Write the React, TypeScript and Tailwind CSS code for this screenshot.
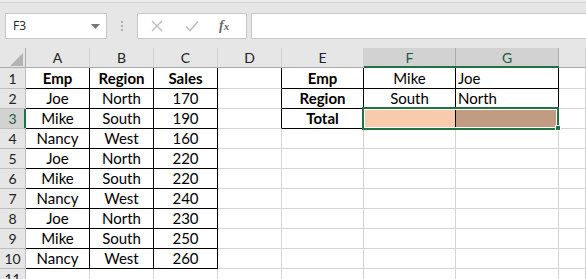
import React from "react";

const cols = ["A", "B", "C", "D", "E", "F", "G", ""];
const cellFont = { fontFamily: "Lato, 'Open Sans', sans-serif" };

type Cell = { t?: string; b?: boolean; a?: "l" | "c"; bg?: string };

const data: Record<string, Cell> = {};
const left = [
  ["Emp", "Region", "Sales"],
  ["Joe", "North", "170"],
  ["Mike", "South", "190"],
  ["Nancy", "West", "160"],
  ["Joe", "North", "220"],
  ["Mike", "South", "220"],
  ["Nancy", "West", "240"],
  ["Joe", "North", "230"],
  ["Mike", "South", "250"],
  ["Nancy", "West", "260"],
];
left.forEach((row, i) =>
  row.forEach((v, j) => {
    data[`${i + 1}-${j}`] = { t: v, b: i === 0, a: "c" };
  })
);
data["1-4"] = { t: "Emp", b: true, a: "c" };
data["2-4"] = { t: "Region", b: true, a: "c" };
data["3-4"] = { t: "Total", b: true, a: "c" };
data["1-5"] = { t: "Mike", a: "c" };
data["2-5"] = { t: "South", a: "c" };
data["1-6"] = { t: "Joe", a: "l" };
data["2-6"] = { t: "North", a: "l" };
data["3-5"] = { bg: "bg-[#f8cbad]" };
data["3-6"] = { bg: "bg-[#c19c83]" };

const bordered = (r: number, c: number) =>
  (r >= 1 && r <= 10 && c >= 0 && c <= 2) || (r >= 1 && r <= 3 && c >= 4 && c <= 6);

export default function App() {
  const rows = Array.from({ length: 11 }, (_, i) => i + 1);
  return (
    <div className="w-[586px] h-[279px] overflow-hidden bg-white relative select-none">
      {/* ribbon bottom strip */}
      <div className="h-[48px] bg-[#e6e6e6] flex flex-col">
        <div className="h-[3px] border-b border-[#d2d2d2] bg-[#ececec]" />
        <div className="flex items-center mt-[10px] h-[26px]">
          <div className="ml-[5px] w-[102px] h-[26px] bg-white border border-[#c6c6c6] flex items-center justify-between pl-[7px] pr-[6px]">
            <span className="text-[12px] text-[#222]" style={{ fontFamily: "'Open Sans', sans-serif" }}>
              F3
            </span>
            <svg width="9" height="5" viewBox="0 0 9 5">
              <path d="M0 0 H9 L4.5 5 Z" fill="#777" />
            </svg>
          </div>
          <div className="w-[30px] flex flex-col items-center gap-[2px]">
            <div className="w-[2px] h-[2px] bg-[#b0b0b0]" />
            <div className="w-[2px] h-[2px] bg-[#b0b0b0]" />
            <div className="w-[2px] h-[2px] bg-[#b0b0b0]" />
          </div>
          <div className="w-[110px] h-[26px] bg-white border border-[#c6c6c6] flex items-center">
            <svg width="12" height="12" viewBox="0 0 12 12" className="ml-[13px]">
              <path d="M1 1 L11 11 M11 1 L1 11" stroke="#bdbdbd" strokeWidth="1.4" />
            </svg>
            <svg width="14" height="12" viewBox="0 0 14 12" className="ml-[22px]">
              <path d="M1 6.5 L5 10.5 L13 1.5" stroke="#bdbdbd" strokeWidth="1.6" fill="none" />
            </svg>
            <span
              className="ml-[20px] text-[14px] italic font-bold text-[#6a6a6a] leading-none"
              style={{ fontFamily: "'Liberation Serif', serif" }}
            >
              f<span className="text-[11px]">x</span>
            </span>
          </div>
          <div className="ml-[4px] flex-1 h-[26px] bg-white border border-[#c6c6c6] border-r-0" />
        </div>
      </div>

      {/* grid */}
      <div
        className="grid grid-cols-[26px_64px_64px_64px_64px_82px_92px_103px_1fr] grid-rows-[20px_21px_repeat(10,20px)]"
        style={cellFont}
      >
        {/* header row */}
        <div className="bg-[#e6e6e6] border-r border-b border-[#ababab] relative">
          <svg width="13" height="13" viewBox="0 0 13 13" className="absolute left-[10px] top-[5px]">
            <path d="M13 0 V13 H0 Z" fill="#b4b4b4" />
          </svg>
        </div>
        {cols.map((c, i) => {
          const sel = i === 5 || i === 6;
          return (
            <div
              key={i}
              className={`relative flex items-center justify-center border-b border-[#ababab] text-[14px] ${
                sel ? "bg-[#d2d2d2] text-[#1e5a37] border-r border-r-[#ababab]" : "bg-[#e6e6e6] text-[#222] border-r border-r-[#d0d0d0]"
              }`}
            >
              {c}
              {sel && <div className="absolute left-0 right-[-1px] bottom-[-1px] h-[2px] bg-[#217346]" />}
            </div>
          );
        })}

        {rows.map((r) => (
          <React.Fragment key={r}>
            <div
              className={`relative flex items-center justify-center border-r border-b text-[14px] ${
                r === 3 ? "bg-[#d2d2d2] text-[#1e5a37] border-[#bdbdbd]" : "bg-[#e6e6e6] text-[#222] border-[#bdbdbd]"
              }`}
            >
              {r}
              {r === 3 && <div className="absolute right-[-1px] top-0 bottom-0 w-[2px] bg-[#217346]" />}
            </div>
            {cols.map((c, j) => {
              const d = data[`${r}-${j}`] || {};
              const rb = bordered(r, j) || bordered(r, j + 1);
              const bb = bordered(r, j) || bordered(r + 1, j);
              return (
                <div
                  key={j}
                  className={`flex items-center overflow-hidden whitespace-nowrap text-[15px] text-black border-r border-b ${
                    rb ? "border-r-black" : "border-r-[#d4d4d4]"
                  } ${bb ? "border-b-black" : "border-b-[#d4d4d4]"} ${d.bg ?? ""} ${
                    d.a === "l" ? "justify-start pl-[2px]" : "justify-center"
                  } ${d.b ? "font-bold" : ""}`}
                >
                  {d.t}
                </div>
              );
            })}
          </React.Fragment>
        ))}
      </div>

      {/* selection overlay */}
      <div className="absolute left-[362px] top-[107px] w-[197px] h-[23px] border-2 border-[#217346] shadow-[inset_0_0_0_1px_#ffffff] pointer-events-none" />
      <div className="absolute left-[555px] top-[125px] w-[6px] h-[6px] bg-[#217346] border border-white pointer-events-none" />
    </div>
  );
}
